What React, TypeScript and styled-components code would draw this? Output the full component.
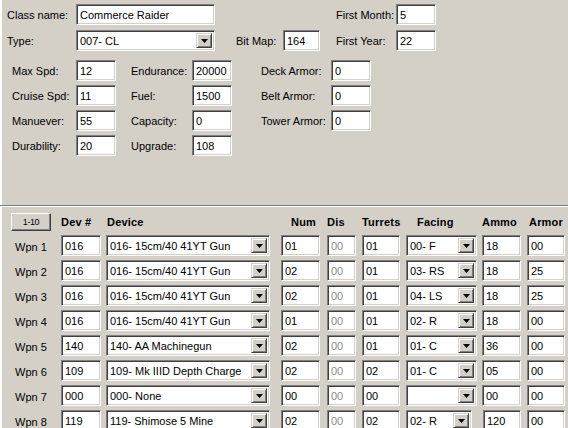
import React from "react";
import styled, { createGlobalStyle, css } from "styled-components";

const Global = createGlobalStyle`
  html, body { margin: 0; padding: 0; background: #d4d0c8; overflow: hidden; }
  body { font-family: "Liberation Sans", Arial, sans-serif; font-size: 11px; color: #000; }
  #root { width: 568px; height: 428px; overflow: hidden; }
`;

const sunken = css`
  box-sizing: border-box;
  height: 21px;
  border-top: 1px solid #808080;
  border-left: 1px solid #808080;
  border-right: 1px solid #ffffff;
  border-bottom: 1px solid #ffffff;
  box-shadow: inset 1px 1px 0 #404040, inset -1px -1px 0 #d4d0c8;
  background: #ffffff;
`;

const Window = styled.div`
  width: 568px;
  height: 428px;
  display: flex;
  flex-direction: column;
  background: #d4d0c8;
  overflow: hidden;
`;

const TopPanel = styled.div`
  box-sizing: border-box;
  flex: none;
  height: 206px;
  padding: 4px 0 0 0;
  border-bottom: 1px solid #808080;
  box-shadow: inset 2px 0 0 #ffffff, inset 1px 0 0 #d4d0c8;
  display: flex;
  flex-direction: column;
`;

const BottomPanel = styled.div`
  box-sizing: border-box;
  flex: 1 0 auto;
  border-top: 1px solid #ffffff;
  padding: 6px 0 0 11px;
  box-shadow: inset 2px 0 0 #ffffff, inset 1px 0 0 #d4d0c8;
  display: flex;
  flex-direction: column;
  gap: 4px;
`;

const FormRow = styled.div`
  display: flex;
  align-items: center;
  height: 21px;
  padding-left: 7px;
`;

const HeadRows = styled.div`
  display: flex;
  flex-direction: column;
  gap: 5px;
`;

const Label = styled.div<{ $w: number; $ml?: number }>`
  width: ${(p) => p.$w}px;
  margin-left: ${(p) => p.$ml ?? 0}px;
  flex: none;
  white-space: nowrap;
  line-height: 21px;
  padding-top: 1px;
  box-sizing: border-box;
`;

const Field = styled.div<{ $w: number; $ml?: number; $disabled?: boolean }>`
  ${sunken};
  width: ${(p) => p.$w}px;
  margin-left: ${(p) => p.$ml ?? 0}px;
  flex: none;
  padding: 1px 0 0 3px;
  display: flex;
  align-items: center;
  white-space: nowrap;
  overflow: hidden;
  color: ${(p) => (p.$disabled ? "#8a8a8a" : "#000")};
`;

const SelectBox = styled.div<{ $w: number; $ml?: number }>`
  ${sunken};
  width: ${(p) => p.$w}px;
  margin-left: ${(p) => p.$ml ?? 0}px;
  flex: none;
  padding: 2px 2px 2px 3px;
  display: flex;
  align-items: stretch;
`;

const SelectText = styled.div`
  flex: 1;
  display: flex;
  align-items: center;
  padding-top: 1px;
  white-space: nowrap;
  overflow: hidden;
`;

const DropButton = styled.div`
  box-sizing: border-box;
  width: 16px;
  flex: none;
  background: #d4d0c8;
  border-top: 1px solid #d4d0c8;
  border-left: 1px solid #d4d0c8;
  border-right: 1px solid #404040;
  border-bottom: 1px solid #404040;
  box-shadow: inset 1px 1px 0 #ffffff, inset -1px -1px 0 #808080;
  display: flex;
  align-items: center;
  justify-content: center;
`;

const StatsGrid = styled.div`
  margin-top: 9px;
  padding-left: 12px;
  display: grid;
  grid-template-columns: 64px 40px 76px 40px 99px 40px;
  grid-auto-rows: 21px;
  row-gap: 4px;
`;

const GridLabel = styled.div<{ $pl?: number }>`
  padding-left: ${(p) => p.$pl ?? 0}px;
  padding-top: 1px;
  line-height: 21px;
  white-space: nowrap;
`;

const Empty = styled.div``;

const TableRow = styled.div<{ $h?: number }>`
  display: flex;
  align-items: center;
  flex: none;
  height: ${(p) => p.$h ?? 21}px;
`;

const Cell = styled.div<{ $w: number; $ml?: number; $pl?: number }>`
  width: ${(p) => p.$w}px;
  margin-left: ${(p) => p.$ml ?? 0}px;
  padding-left: ${(p) => p.$pl ?? 0}px;
  box-sizing: border-box;
  flex: none;
  white-space: nowrap;
`;

const HeadText = styled(Cell)`
  font-weight: bold;
  font-size: 11px;
  letter-spacing: 0.2px;
`;

const RangeButton = styled.div`
  box-sizing: border-box;
  width: 40px;
  height: 18px;
  background: #d4d0c8;
  border-top: 1px solid #ffffff;
  border-left: 1px solid #ffffff;
  border-right: 1px solid #404040;
  border-bottom: 1px solid #404040;
  box-shadow: inset -1px -1px 0 #808080;
  display: flex;
  align-items: center;
  justify-content: center;
  font-size: 9px;
  letter-spacing: -0.4px;
`;

const WpnLabel = styled(Cell)`
  padding-left: 4px;
  padding-top: 2px;
`;

const Arrow = () => (
  <svg width="7" height="4" viewBox="0 0 7 4">
    <path d="M0 0h7L3.5 4z" fill="#000" />
  </svg>
);

const Select = ({ w, ml, text }: { w: number; ml?: number; text: string }) => (
  <SelectBox $w={w} $ml={ml}>
    <SelectText>{text}</SelectText>
    <DropButton>
      <Arrow />
    </DropButton>
  </SelectBox>
);

type Wpn = {
  dev: string;
  device: string;
  num: string;
  dis: string;
  tur: string;
  facing: string;
  ammo: string;
  armor: string;
};

const gun = "016- 15cm/40 41YT Gun";
const weapons: Wpn[] = [
  { dev: "016", device: gun, num: "01", dis: "00", tur: "01", facing: "00- F", ammo: "18", armor: "00" },
  { dev: "016", device: gun, num: "02", dis: "00", tur: "01", facing: "03- RS", ammo: "18", armor: "25" },
  { dev: "016", device: gun, num: "02", dis: "00", tur: "01", facing: "04- LS", ammo: "18", armor: "25" },
  { dev: "016", device: gun, num: "01", dis: "00", tur: "01", facing: "02- R", ammo: "18", armor: "00" },
  { dev: "140", device: "140- AA Machinegun", num: "02", dis: "00", tur: "01", facing: "01- C", ammo: "36", armor: "00" },
  { dev: "109", device: "109- Mk IIID Depth Charge", num: "02", dis: "00", tur: "02", facing: "01- C", ammo: "05", armor: "00" },
  { dev: "000", device: "000- None", num: "00", dis: "00", tur: "00", facing: "", ammo: "00", armor: "00" },
  { dev: "119", device: "119- Shimose 5 Mine", num: "02", dis: "00", tur: "02", facing: "02- R", ammo: "120", armor: "00" },
];

export default function App() {
  return (
    <Window>
      <Global />
      <TopPanel>
        <HeadRows>
          <FormRow>
            <Label $w={69}>Class name:</Label>
            <Field $w={139}>Commerce Raider</Field>
            <Label $w={60} $ml={121}>First Month:</Label>
            <Field $w={40}>5</Field>
          </FormRow>
          <FormRow>
            <Label $w={69}>Type:</Label>
            <Select w={139} text="007- CL" />
            <Label $w={47} $ml={21}>Bit Map:</Label>
            <Field $w={37}>164</Field>
            <Label $w={60} $ml={16}>First Year:</Label>
            <Field $w={40}>22</Field>
          </FormRow>
        </HeadRows>
        <StatsGrid>
          <GridLabel>Max Spd:</GridLabel>
          <Field $w={40}>12</Field>
          <GridLabel $pl={15}>Endurance:</GridLabel>
          <Field $w={40}>20000</Field>
          <GridLabel $pl={29}>Deck Armor:</GridLabel>
          <Field $w={40}>0</Field>

          <GridLabel>Cruise Spd:</GridLabel>
          <Field $w={40}>11</Field>
          <GridLabel $pl={15}>Fuel:</GridLabel>
          <Field $w={40}>1500</Field>
          <GridLabel $pl={29}>Belt Armor:</GridLabel>
          <Field $w={40}>0</Field>

          <GridLabel>Manuever:</GridLabel>
          <Field $w={40}>55</Field>
          <GridLabel $pl={15}>Capacity:</GridLabel>
          <Field $w={40}>0</Field>
          <GridLabel $pl={29}>Tower Armor:</GridLabel>
          <Field $w={40}>0</Field>

          <GridLabel>Durability:</GridLabel>
          <Field $w={40}>20</Field>
          <GridLabel $pl={15}>Upgrade:</GridLabel>
          <Field $w={40}>108</Field>
          <Empty />
          <Empty />
        </StatsGrid>
      </TopPanel>
      <BottomPanel>
        <TableRow $h={18}>
          <Cell $w={50}>
            <RangeButton>1-10</RangeButton>
          </Cell>
          <HeadText $w={40}>Dev #</HeadText>
          <HeadText $w={164} $ml={5} $pl={1}>Device</HeadText>
          <HeadText $w={39} $ml={11} $pl={10}>Num</HeadText>
          <HeadText $w={29} $ml={7}>Dis</HeadText>
          <HeadText $w={38} $ml={6}>Turrets</HeadText>
          <HeadText $w={71} $ml={6} $pl={11}>Facing</HeadText>
          <HeadText $w={39} $ml={5}>Ammo</HeadText>
          <HeadText $w={38} $ml={6} $pl={2}>Armor</HeadText>
        </TableRow>
        {weapons.map((w, i) => {
          const last = i === weapons.length - 1;
          return (
            <TableRow key={i}>
              <WpnLabel $w={50}>Wpn {i + 1}</WpnLabel>
              <Field $w={40}>{w.dev}</Field>
              <Select w={164} ml={5} text={w.device} />
              <Field $w={39} $ml={11}>{w.num}</Field>
              <Field $w={29} $ml={7} $disabled>{w.dis}</Field>
              <Field $w={38} $ml={6}>{w.tur}</Field>
              <Select w={last ? 66 : 71} ml={6} text={w.facing} />
              <Field $w={last ? 38 : 39} $ml={last ? 11 : 5}>{w.ammo}</Field>
              <Field $w={38} $ml={6}>{w.armor}</Field>
            </TableRow>
          );
        })}
      </BottomPanel>
    </Window>
  );
}
